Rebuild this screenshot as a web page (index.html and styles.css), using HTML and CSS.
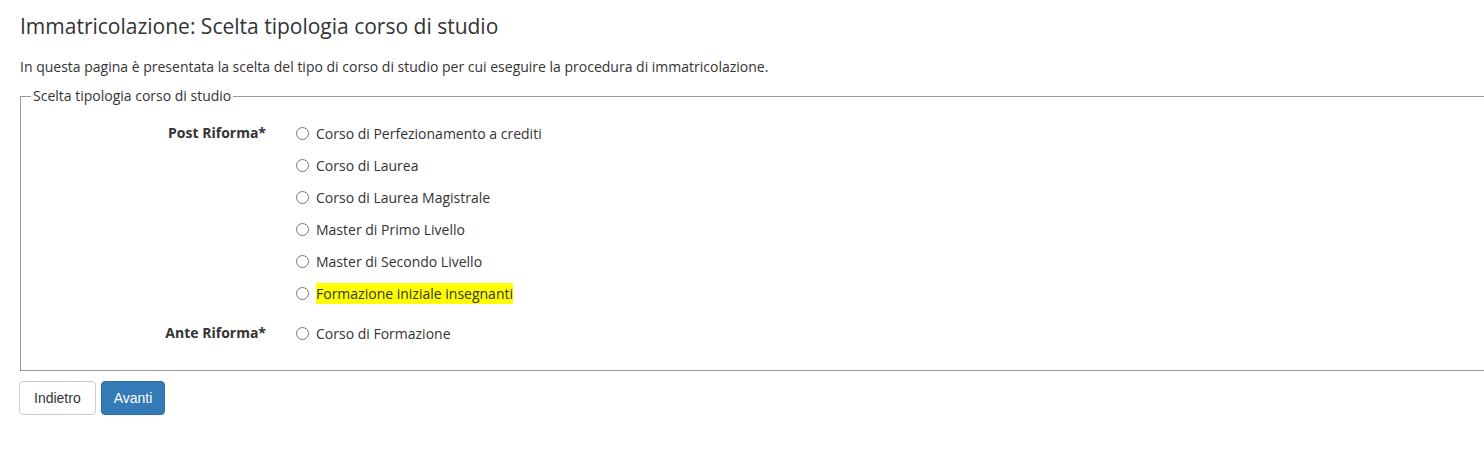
FILE: index.html
```html
<!DOCTYPE html>
<html lang="it">
  <head>
    <meta charset="UTF-8" />
    <title>Immatricolazione</title>
    <link rel="stylesheet" href="styles.css">
  </head>
  <body>
    <div class="page">
      <h1 class="page-title">Immatricolazione: Scelta tipologia corso di studio</h1>
      <p class="intro">In questa pagina è presentata la scelta del tipo di corso di studio per cui eseguire la procedura di immatricolazione.</p>

      <fieldset class="choice-box">
        <legend>Scelta tipologia corso di studio</legend>

        <div class="choice-group">
          <div class="group-label">Post Riforma*</div>
          <div class="options">
            <label class="option"><input type="radio" name="tipo" /> <span>Corso di Perfezionamento a crediti</span></label>
            <label class="option"><input type="radio" name="tipo" /> <span>Corso di Laurea</span></label>
            <label class="option"><input type="radio" name="tipo" /> <span>Corso di Laurea Magistrale</span></label>
            <label class="option"><input type="radio" name="tipo" /> <span>Master di Primo Livello</span></label>
            <label class="option"><input type="radio" name="tipo" /> <span>Master di Secondo Livello</span></label>
            <label class="option"><input type="radio" name="tipo" /> <span class="marked">Formazione iniziale insegnanti</span></label>
          </div>
        </div>

        <div class="choice-group">
          <div class="group-label">Ante Riforma*</div>
          <div class="options">
            <label class="option"><input type="radio" name="tipo" /> <span>Corso di Formazione</span></label>
          </div>
        </div>
      </fieldset>

      <div class="actions">
        <button class="btn btn-default">Indietro</button>
        <button class="btn btn-primary">Avanti</button>
      </div>
    </div>
  </body>
</html>
```

FILE: styles.css
```css
html {
  overflow-x: hidden;
}
body {
  margin: 0;
  background-color: #fff;
  color: #333;
  font-family: "Open Sans", Arial, sans-serif;
  font-size: 14px;
}
.page {
  padding: 0 0 0 20px;
}
.page-title {
  margin: 0;
  padding-top: 12px;
  font-size: 21px;
  font-weight: normal;
  line-height: 28px;
  color: #333;
}
.intro {
  margin: 0;
  padding-top: 17px;
  line-height: 20px;
}
.choice-box {
  margin: 10px -20px 0 0;
  padding: 12px 0 13px 0;
  border: 1px solid #999;
  min-width: 0;
}
.choice-box legend {
  margin-left: 10px;
  padding: 0 2px;
  font-size: 14px;
  line-height: 18px;
}
.choice-group {
  display: flex;
  margin-bottom: 8px;
}
.group-label {
  width: 245px;
  text-align: right;
  font-weight: bold;
  line-height: 32px;
}
.options {
  display: flex;
  flex-direction: column;
  padding-left: 25px;
}
.option {
  display: flex;
  align-items: center;
  height: 32px;
}
.option input {
  margin: 0 7px 0 5px;
  width: 13px;
  height: 13px;
}
.marked {
  background-color: #ffff00;
  padding: 1px 0;
}
.actions {
  display: flex;
  gap: 5px;
  margin-top: 10px;
  margin-left: -1px;
}
.btn {
  font-family: "Liberation Sans", Arial, sans-serif;
  font-size: 14px;
  height: 34px;
  padding: 0 12px;
  border-radius: 4px;
  border: 1px solid #ccc;
}
.btn-default {
  padding: 0 14px;
  background-color: #fff;
  color: #333;
}
.btn-primary {
  background-color: #337ab7;
  border-color: #2e6da4;
  color: #fff;
}
```
